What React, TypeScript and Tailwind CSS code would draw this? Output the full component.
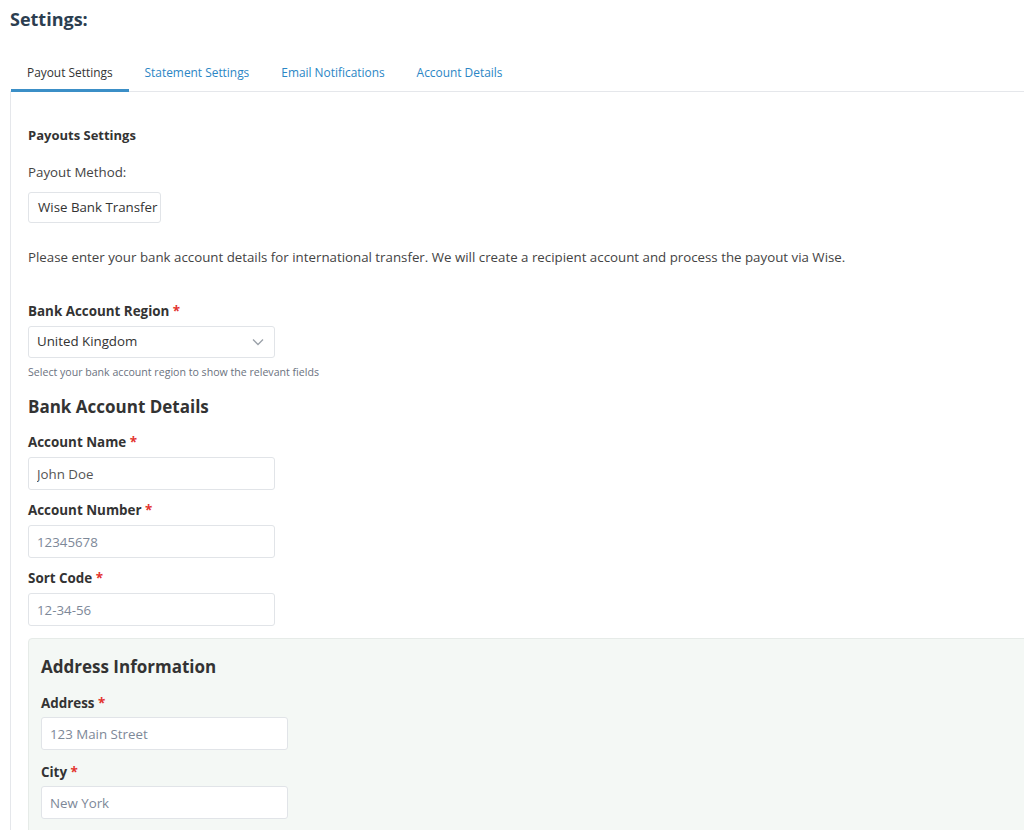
import React from "react";

const font = { fontFamily: '"Open Sans", "Noto Sans", sans-serif' };

function Label({ text }: { text: string }) {
  return (
    <div className="text-[13.4px] font-bold text-[#333] leading-[20px]">
      {text} <span className="text-[#e3342f]">*</span>
    </div>
  );
}

function Field({ label, placeholder, value, gap = "gap-[5px]" }: { label: string; placeholder: string; value?: string; gap?: string }) {
  return (
    <div className={"flex flex-col " + gap}>
      <Label text={label} />
      <input
        className="w-[247px] h-[33px] border border-[#e1e4e8] rounded-[3px] bg-white px-[8px] text-[13.3px] text-[#555] placeholder:text-[#7d8898] outline-none"
        placeholder={placeholder}
        defaultValue={value}
        style={font}
      />
    </div>
  );
}

export default function App() {
  const tabs = ["Payout Settings", "Statement Settings", "Email Notifications", "Account Details"];
  const [active, setActive] = React.useState(0);

  return (
    <div className="w-screen min-h-[830px] overflow-hidden bg-white" style={font}>
      <div className="pl-[10px] pt-[6px]">
        <h1 className="text-[18px] font-bold text-[#2c3e50] leading-[26px]">Settings:</h1>

        {/* tabs */}
        <div className="mt-[21px] flex border-b border-[#e5e7eb] w-[1100px] pl-[1px]">
          {tabs.map((t, i) => (
            <button
              key={t}
              onClick={() => setActive(i)}
              className={
                i === active
                  ? "px-[16px] pt-[4px] h-[39px] text-[11.9px] text-[#333] border-b-[3px] border-[#3b8fc7] -mb-[1px]"
                  : "px-[16px] pt-[4px] h-[39px] text-[11.9px] text-[#2b86c5] border-b-[3px] border-transparent -mb-[1px]"
              }
            >
              {t}
            </button>
          ))}
        </div>

        <div className="border-l border-[#e5e7eb] w-[1100px] pl-[17px] pt-[34px]">
          <div className="text-[13px] font-bold text-[#333] leading-[18px]">Payouts Settings</div>
          <div className="mt-[19px] text-[13.3px] text-[#444] leading-[18px]">Payout Method:</div>
          <div className="mt-[11px] w-[133px] h-[31px] border border-[#e1e4e8] rounded-[3px] pl-[9px] flex items-center overflow-hidden whitespace-nowrap text-[13.3px] text-[#333]">
            Wise Bank Transfer
          </div>
          <p className="mt-[24px] text-[13.3px] text-[#444] leading-[20px]">
            Please enter your bank account details for international transfer. We will create a recipient account and process the payout via Wise.
          </p>

          <div className="mt-[34px] flex flex-col gap-[5px]">
            <Label text="Bank Account Region" />
            <div className="w-[247px] h-[32px] border border-[#e1e4e8] rounded-[3px] px-[8px] flex items-center justify-between text-[13.3px] text-[#333]">
              <span>United Kingdom</span>
              <svg width="12" height="8" viewBox="0 0 12 8" fill="none" className="mr-[2px]">
                <path d="M1 1.5l5 5 5-5" stroke="#9aa1a9" strokeWidth="1.3" />
              </svg>
            </div>
          </div>
          <div className="mt-[6px] text-[10.6px] text-[#6b7280] leading-[16px]">
            Select your bank account region to show the relevant fields
          </div>

          <h2 className="mt-[15px] text-[17px] font-bold text-[#333] leading-[24px]">Bank Account Details</h2>

          <div className="mt-[13px] flex flex-col gap-[10px]">
            <Field label="Account Name" placeholder="" value="John Doe" />
            <Field label="Account Number" placeholder="12345678" />
            <Field label="Sort Code" placeholder="12-34-56" />
          </div>

          <div className="mt-[12px] bg-[#f4f8f5] border border-[#e6ebe8] rounded-[4px] pl-[12px] pt-[15px] pb-[20px]">
            <h3 className="text-[17px] font-bold text-[#333] leading-[26px]">Address Information</h3>
            <div className="mt-[13px] flex flex-col gap-[12px]">
              <Field label="Address" placeholder="123 Main Street" gap="gap-[4px]" />
              <Field label="City" placeholder="New York" gap="gap-[4px]" />
            </div>
          </div>
        </div>
      </div>
    </div>
  );
}
